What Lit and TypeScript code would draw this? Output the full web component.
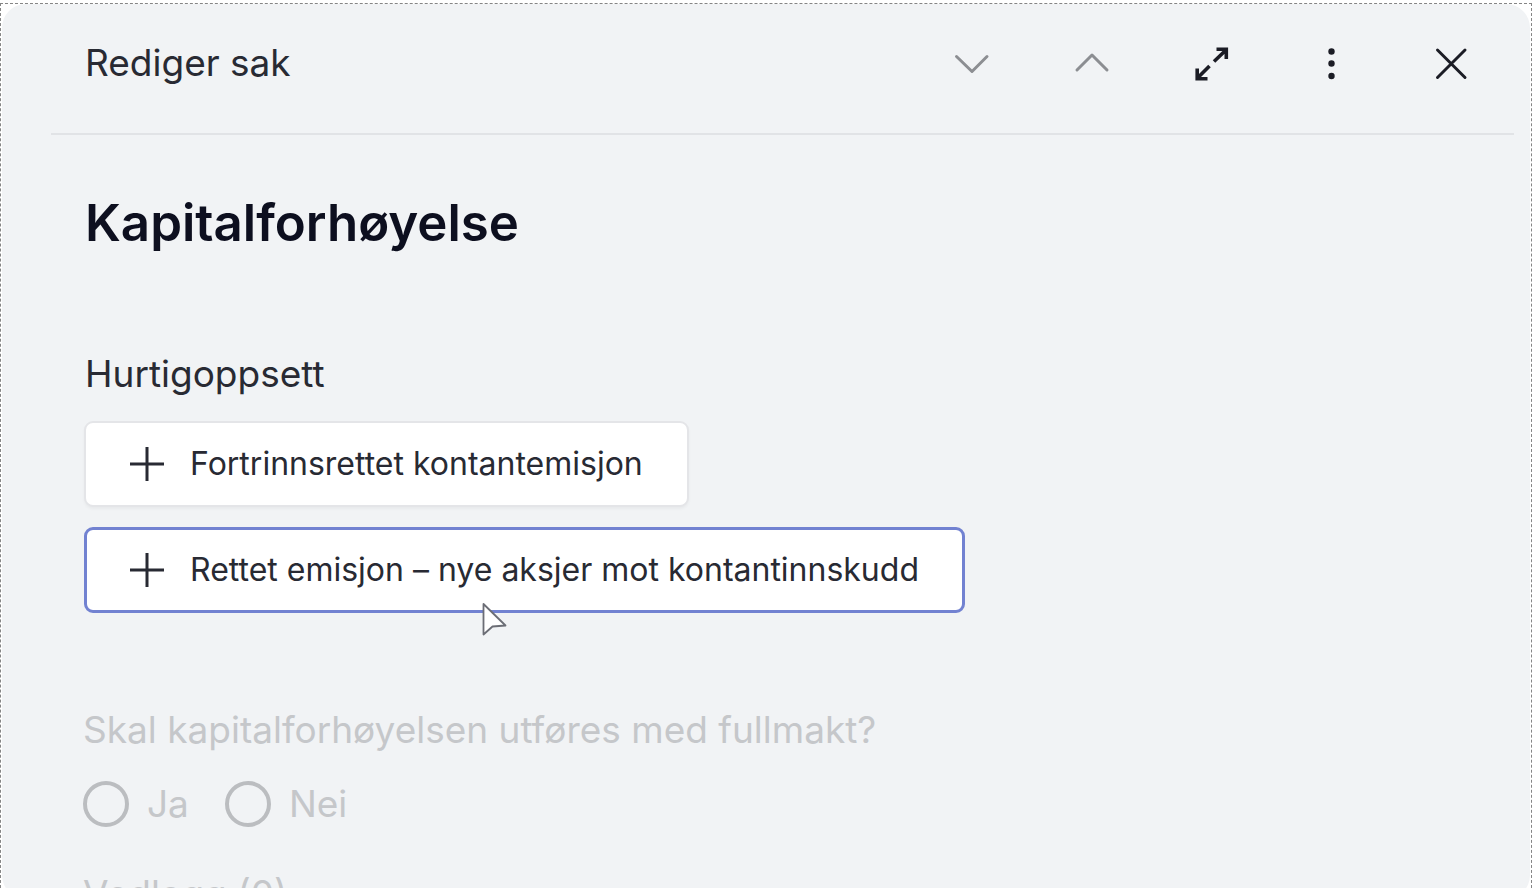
import { LitElement, html, css, svg } from "lit";
import { customElement, state } from "lit/decorators.js";

const icons = {
  down: svg`<path d="M5.5 13.5 21 28.5 36 13.5"/>`,
  up: svg`<path d="M6 27 21 12 36 27"/>`,
  expand: svg`<path d="M23 18.5 35 7M25.5 6.2H35.3V16M18.5 23 7 34.5M6.2 25.5V35.8H16.5"/>`,
  close: svg`<path d="M6.5 7 34 34.5M34 7 6.5 34.5"/>`,
};

@customElement("app-root")
export class AppRoot extends LitElement {
  @state() private selected = 1;

  private presets = [
    "Fortrinnsrettet kontantemisjon",
    "Rettet emisjon – nye aksjer mot kontantinnskudd",
  ];

  static styles = css`
    :host {
      display: block;
      box-sizing: border-box;
      height: 100vh;
      padding: 3px 6px 0 0;
      overflow: hidden;
      background: #fff;
      color: #282a33;
      font-family: Inter, "Liberation Sans", sans-serif;
      font-size: 37px;
      line-height: 48px;
    }
    * { box-sizing: border-box; }
    button {
      margin: 0;
      font: inherit;
      color: inherit;
      cursor: pointer;
    }
    svg {
      display: block;
      fill: none;
      stroke: currentColor;
      stroke-linecap: round;
      stroke-linejoin: round;
    }
    .frame {
      height: 100%;
      padding: 0 1px;
      border: 1px dashed #858585;
      border-bottom: 0;
      overflow: hidden;
    }
    .panel {
      height: calc(100% + 11px);
      overflow: hidden;
      border-radius: 24px;
      background: #f1f3f5;
    }
    header {
      display: flex;
      align-items: center;
      justify-content: space-between;
      height: 131px;
      margin: 0 16px 0 49px;
      padding: 0 43px 12px 34px;
      border-bottom: 2px solid #e1e3e6;
    }
    .title, h1, h2 { margin: 0; font-weight: 400; font-size: inherit; }
    .tools { display: flex; gap: 80px; }
    .tool {
      display: block;
      padding: 0;
      border: 0;
      background: none;
      color: #1b1c25;
    }
    .tool svg { width: 40px; height: 40px; stroke-width: 3; }
    .tool:disabled { color: #8c8e92; }
    .tool .bold { stroke-width: 3.6; stroke-linecap: butt; stroke-linejoin: miter; }
    .tool .dots { fill: currentColor; stroke: none; }
    main { padding: 0 81px; }
    h1 {
      padding: 56px 0 95px 2px;
      color: #0d0f1f;
      font-size: 51px;
      line-height: 64px;
      font-weight: 600;
    }
    .presets {
      display: flex;
      flex-direction: column;
      align-items: flex-start;
      gap: 20px;
      padding: 23px 0 0 1px;
    }
    h2 { padding-left: 2px; }
    .preset {
      display: flex;
      align-items: center;
      gap: 24px;
      padding: 17px 44px 17px 42px;
      border: 2px solid #e4e5e8;
      border-radius: 9px;
      background: #fff;
      box-shadow: 0 2px 3px #0000000a;
      font-size: 32px;
      line-height: 48px;
    }
    .preset svg { width: 38px; height: 38px; stroke-width: 3; stroke-linecap: butt; }
    .preset.active { border-color: #7282d1; border-width: 3px; padding: 16px 43px 16px 41px; box-shadow: none; }
    fieldset {
      margin: 0;
      padding: 93px 0 0;
      border: 0;
      color: #c5c7ca;
    }
    legend { float: left; width: 100%; padding: 0; }
    .options {
      clear: both;
      display: flex;
      gap: 36px;
      padding-top: 26px;
    }
    label { display: flex; align-items: center; gap: 18px; }
    input {
      appearance: none;
      width: 46px;
      height: 46px;
      margin: 0;
      border: 4px solid #bbbdc0;
      border-radius: 50%;
    }
    .attachments { margin: 0; padding-top: 42px; color: #c5c7ca; }
    .cursor {
      position: absolute;
      left: 480px;
      top: 600px;
      width: 28px;
      height: 38px;
      pointer-events: none;
    }
  `;

  render() {
    return html`
      <div class="frame">
        <section class="panel">
          <header>
            <p class="title">Rediger sak</p>
            <div class="tools">
              <button class="tool" aria-label="Neste" disabled><svg viewBox="0 0 40 40">${icons.down}</svg></button>
              <button class="tool" aria-label="Forrige" disabled><svg viewBox="0 0 40 40">${icons.up}</svg></button>
              <button class="tool" aria-label="Utvid"><svg class="bold" viewBox="0 0 40 40">${icons.expand}</svg></button>
              <button class="tool" aria-label="Flere valg">
                <svg class="dots" viewBox="0 0 40 40">
                  <circle cx="20.5" cy="8.5" r="3.2"/><circle cx="20.5" cy="20.5" r="3.2"/><circle cx="20.5" cy="33" r="3.2"/>
                </svg>
              </button>
              <button class="tool" aria-label="Lukk"><svg viewBox="0 0 40 40">${icons.close}</svg></button>
            </div>
          </header>
          <main>
            <h1>Kapitalforhøyelse</h1>
            <h2>Hurtigoppsett</h2>
            <div class="presets">
              ${this.presets.map((name, i) => html`
                <button class="preset ${i === this.selected ? "active" : ""}" @click=${() => (this.selected = i)}>
                  <svg viewBox="0 0 38 38"><path d="M19 2V36M2 19H36"/></svg>
                  <span>${name}</span>
                </button>`)}
            </div>
            <fieldset disabled>
              <legend>Skal kapitalforhøyelsen utføres med fullmakt?</legend>
              <div class="options">
                <label><input type="radio" name="fullmakt" value="ja">Ja</label>
                <label><input type="radio" name="fullmakt" value="nei">Nei</label>
              </div>
            </fieldset>
            <p class="attachments">Vedlegg (0)</p>
          </main>
        </section>
      </div>
      <svg class="cursor" viewBox="0 0 28 38" aria-hidden="true">
        <path d="M3.5 4 25.5 25.5 12.5 26.5 3.5 34.5Z" fill="#fff" stroke="#6b6d75" stroke-width="1.8"/>
      </svg>
    `;
  }
}
